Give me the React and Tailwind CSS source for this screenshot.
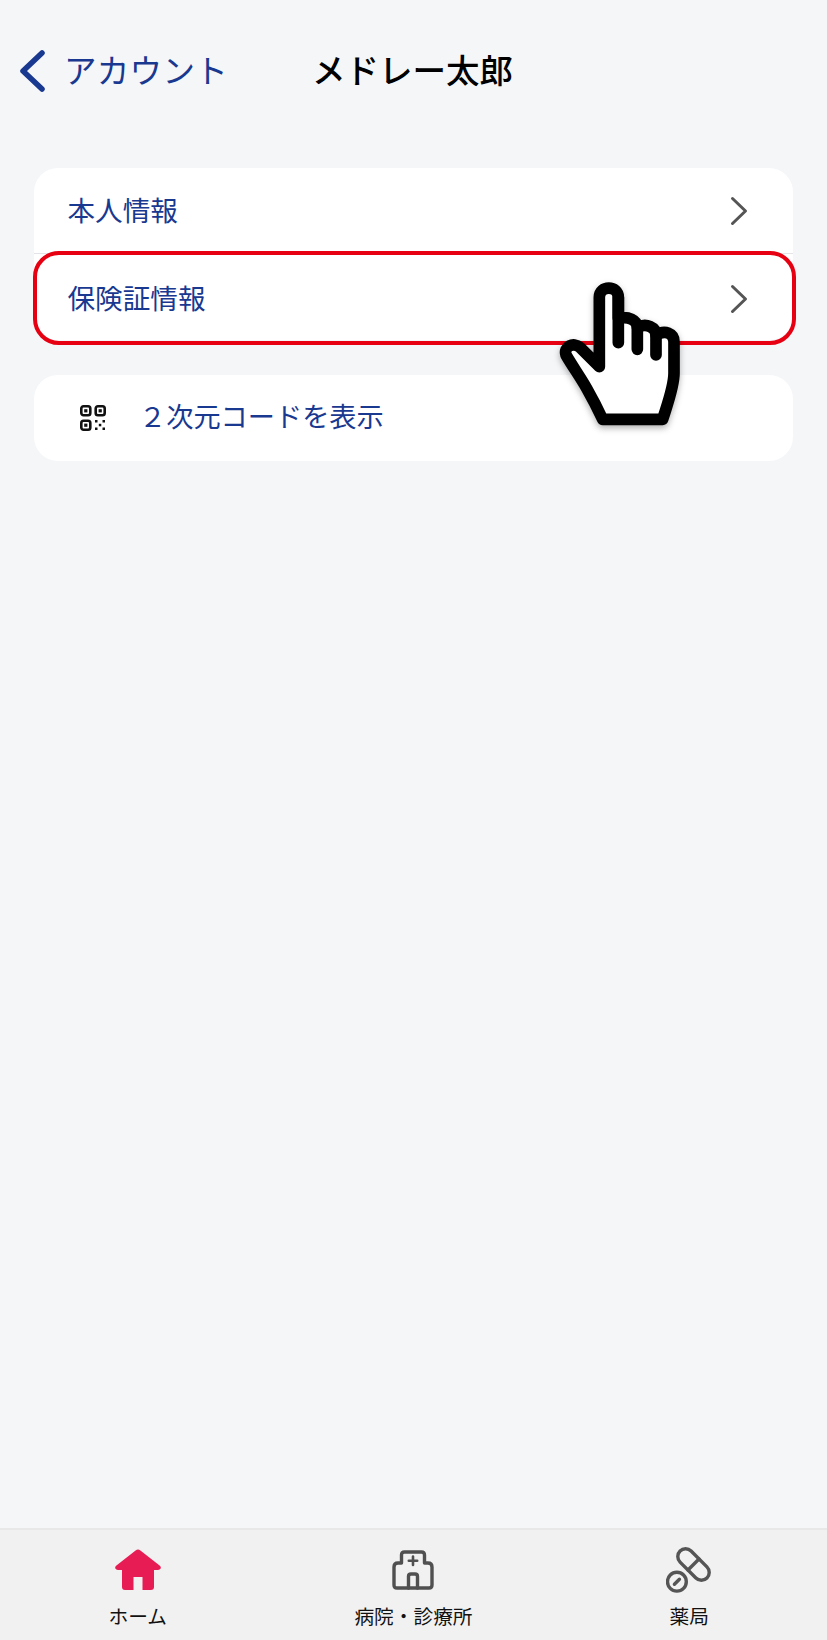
const FONT = '"Noto Sans CJK JP", "Noto Sans", sans-serif';

function Chevron() {
  return (
    <svg width="20" height="30" viewBox="0 0 20 30" fill="none" stroke="#555555" strokeWidth="3" strokeLinecap="round" strokeLinejoin="round">
      <path d="M3.5 2.5 L16.5 15 L3.5 27.5" />
    </svg>
  );
}

function Row({ label, bordered }) {
  return (
    <div className={`flex h-[86px] items-center justify-between pl-[33.5px] pr-[44px] ${bordered ? "border-b border-[#e4e4e6]" : "pt-[3px]"}`}>
      <span className="relative top-[-1px] text-[27.6px] leading-none text-[#19388f]">{label}</span>
      <Chevron />
    </div>
  );
}

function QrIcon() {
  return (
    <svg width="26" height="26" viewBox="0 0 26 26" fill="none">
      <g stroke="#111" strokeWidth="2.6">
        <rect x="1.3" y="1.3" width="9" height="9" rx="2.2" />
        <rect x="15.7" y="1.3" width="9" height="9" rx="2.2" />
        <rect x="1.3" y="15.7" width="9" height="9" rx="2.2" />
      </g>
      <g fill="#111">
        <rect x="4.2" y="4.2" width="3.2" height="3.2" />
        <rect x="18.6" y="4.2" width="3.2" height="3.2" />
        <rect x="4.2" y="18.6" width="3.2" height="3.2" />
        <rect x="15" y="15" width="2.5" height="2.5" />
        <rect x="22.5" y="15" width="2.5" height="2.5" />
        <rect x="18.8" y="18.8" width="2.5" height="2.5" />
        <rect x="15" y="22.5" width="2.5" height="2.5" />
        <rect x="22.5" y="22.5" width="2.5" height="2.5" />
      </g>
    </svg>
  );
}

function HomeIcon() {
  return (
    <svg width="46" height="42" viewBox="0 0 46 42">
      <path
        fill="#e81c55"
        fillRule="evenodd"
        d="M20.6 1.4 Q23 -0.4 25.4 1.4 L44.6 16.6 Q46.4 18.2 45.6 19.6 Q45 21 43 21 L39 21 L39 38 Q39 41 36 41 L27.5 41 L27.5 28 L18.5 28 L18.5 41 L10 41 Q7 41 7 38 L7 21 L3 21 Q1 21 0.4 19.6 Q-0.4 18.2 1.4 16.6 Z"
      />
    </svg>
  );
}

function HospitalIcon() {
  return (
    <svg width="42" height="40" viewBox="0 0 42 40" fill="none" stroke="#505050" strokeWidth="3.4" strokeLinejoin="round" strokeLinecap="round">
      <path d="M9.5 13 L9.5 5 Q9.5 2 12.5 2 L29.5 2 Q32.5 2 32.5 5 L32.5 13 L36 13 Q40 13 40 17 L40 35 Q40 38 37 38 L5 38 Q2 38 2 35 L2 17 Q2 13 6 13 Z" />
      <path d="M21 6.5 V15 M16.8 10.7 H25.2" strokeWidth="2.6" />
      <path d="M16.5 38 V26.5 Q16.5 24 19 24 H23 Q25.5 24 25.5 26.5 V38" />
    </svg>
  );
}

function PillIcon() {
  return (
    <svg width="46" height="46" viewBox="0 0 46 46" fill="none" stroke="#555555" strokeWidth="3.4" strokeLinecap="round">
      <rect x="8.5" y="9.7" width="38" height="15.6" rx="7.8" transform="rotate(45 27.5 17.5)" />
      <path d="M22 23 L33 12" />
      <circle cx="10.9" cy="34.7" r="9.4" />
      <path d="M8.4 37.2 L13.4 32.2" />
    </svg>
  );
}

function Tab({ icon, label }) {
  return (
    <div className="flex flex-col items-center">
      <div className="flex h-[46px] items-center">{icon}</div>
      <span className="mt-[13px] text-[19.7px] leading-none text-[#111]">{label}</span>
    </div>
  );
}

export default function App() {
  return (
    <div className="relative flex h-[1640px] w-[827px] flex-col overflow-hidden bg-[#f5f6f8]" style={{ fontFamily: FONT }}>
      <header className="flex h-[142px] items-center pl-[20px]">
        <svg width="26" height="42" viewBox="0 0 26 42" fill="none" stroke="#19388f" strokeWidth="5.5" strokeLinecap="round" strokeLinejoin="round">
          <path d="M22 3 L3 21 L22 39" />
        </svg>
        <span className="relative top-[-2px] ml-[18px] text-[32.5px] leading-none tracking-[0.3px] text-[#19388f]">アカウント</span>
        <span className="relative top-[-2px] ml-[84px] text-[33.5px] font-medium leading-none text-black">メドレー太郎</span>
      </header>

      <main className="flex-1 px-[34px] pt-[26px]">
        <div className="rounded-[24px] bg-white">
          <Row label="本人情報" bordered />
          <Row label="保険証情報" />
        </div>
        <div className="mt-[35px] flex h-[86px] items-center rounded-[24px] bg-white pl-[46px]">
          <QrIcon />
          <span className="relative top-[-2px] ml-[33px] text-[27.2px] leading-none text-[#19388f]">２次元コードを表示</span>
        </div>
      </main>

      <nav className="grid h-[112px] grid-cols-3 border-t-2 border-[#e8e8e8] bg-[#f1f1f1] pt-[17px]">
        <Tab icon={<HomeIcon />} label="ホーム" />
        <Tab icon={<HospitalIcon />} label="病院・診療所" />
        <Tab icon={<PillIcon />} label="薬局" />
      </nav>

      {/* highlight overlay */}
      <div className="absolute left-[33px] top-[251px] h-[94px] w-[763px] rounded-[26px] border-[4px] border-[#e60012]" />

      {/* pointer hand overlay */}
      <svg className="absolute left-[530px] top-[240px] drop-shadow-[0_3px_3px_rgba(0,0,0,0.3)]" width="297" height="200" viewBox="0 0 891 600" fill="none" stroke="#000" strokeWidth="35" strokeLinecap="round" strokeLinejoin="round">
        <path
          fill="#fff"
          d="M208 380 L208 172 C208 135 265 135 265 172 L265 235 C295 228 322 240 322 262 C350 248 378 262 378 285 C405 268 432 280 432 305 L432 400 C432 440 413 490 398 538 L218 538 C205 510 190 480 170 445 C150 410 125 375 108 345 C100 320 130 305 150 322 Z"
        />
        <path d="M265 172 L265 308 M322 262 L322 328 M378 285 L378 345" />
      </svg>
    </div>
  );
}
